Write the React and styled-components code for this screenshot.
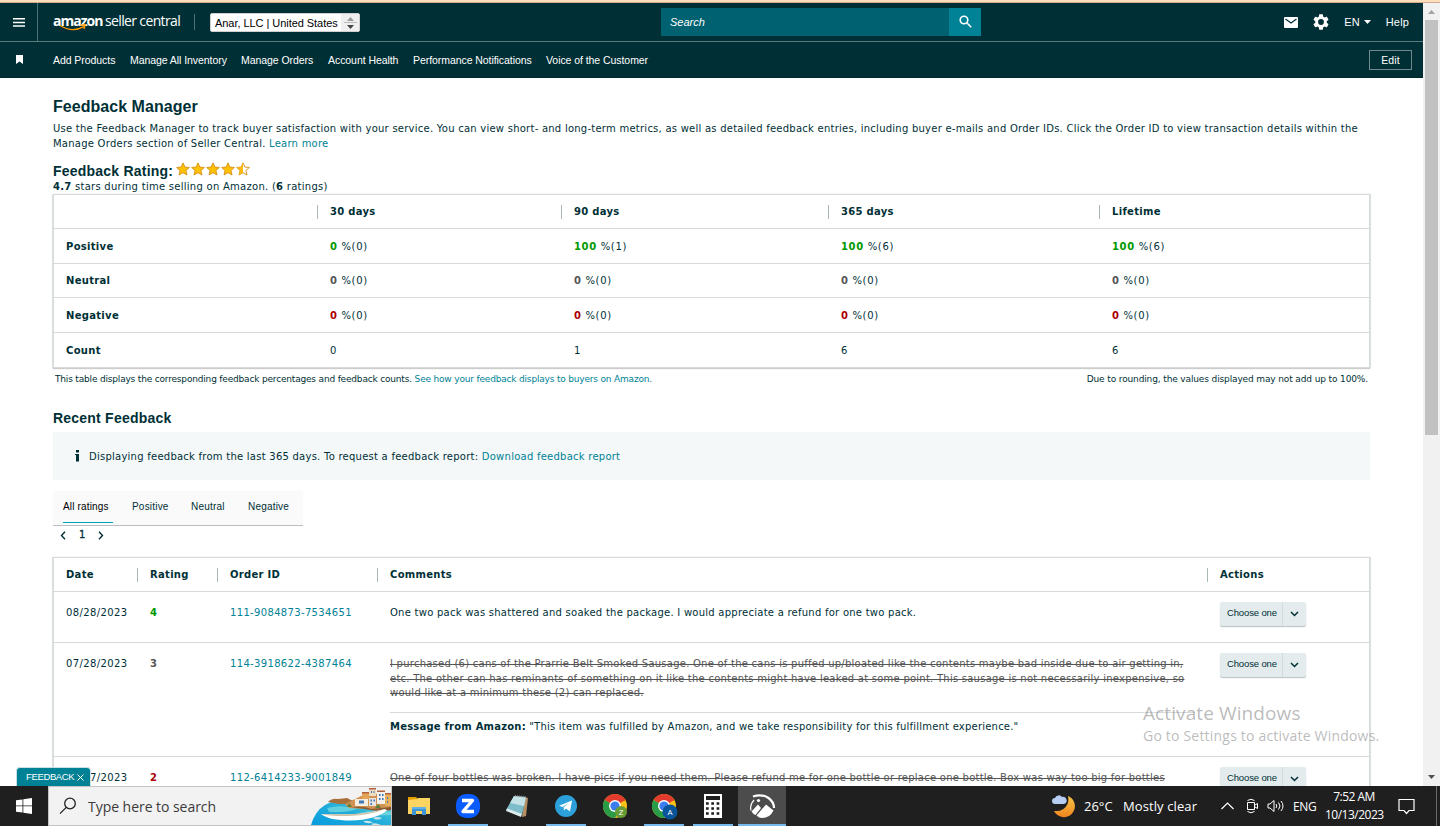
import React from "react";
import styled, { createGlobalStyle, css } from "styled-components";

const GlobalStyle = createGlobalStyle`
  * { box-sizing: border-box; }
  body { margin: 0; background: #fff; overflow: hidden; }
  h1, h2, p { margin: 0; }
`;

const VERDANA = `Verdana, "DejaVu Sans", sans-serif`;
const ARIAL = `Arial, "Liberation Sans", sans-serif`;
const SEGOE = `"Segoe UI", "Open Sans", sans-serif`;

const Screen = styled.div`
  position: relative;
  display: flex;
  flex-direction: column;
  width: 1440px;
  height: 826px;
  overflow: hidden;
  color: #002f36;
  font-family: ${VERDANA};
`;

const TopStrip = styled.div`
  flex: none;
  height: 3px;
  background: #fddfbb;
  border-bottom: 1px solid #cdab8c;
`;

const Viewport = styled.div`
  display: flex;
  height: 783px;
`;

const Page = styled.div`
  width: 1423px;
  overflow: hidden;
`;

/* ---------- header ---------- */

const Header = styled.header`
  height: 75px;
  background: #002f36;
  color: #fff;
  font-family: ${ARIAL};
`;

const HeaderRow = styled.div`
  display: flex;
  align-items: center;
  height: 39px;
  border-bottom: 1px solid #5b7a7e;
`;

const MenuButton = styled.div`
  display: flex;
  align-items: center;
  justify-content: center;
  width: 38px;
  height: 38px;
  border-right: 1px solid #4d7074;
`;

const Logo = styled.div`
  position: relative;
  display: flex;
  gap: 3px;
  width: 128px;
  height: 22px;
  margin-left: 15px;
  font-family: "Open Sans", sans-serif;
  font-size: 14px;
  line-height: 19px;
  white-space: nowrap;
`;

const LogoBold = styled.span`
  width: 49px;
  font-weight: 700;
  letter-spacing: -1px;
`;

const LogoLight = styled.span`
  letter-spacing: -0.64px;
`;

const Smile = styled.svg`
  position: absolute;
  left: 6px;
  top: 12px;
`;

const Divider = styled.div`
  width: 1px;
  height: 16px;
  margin: 0 15px 0 13px;
  background: #4d7074;
`;

const AccountSelect = styled.div`
  display: flex;
  justify-content: space-between;
  width: 150px;
  height: 19px;
  margin-top: 1px;
  padding-left: 4px;
  overflow: hidden;
  border: 1px solid #d0d0d0;
  border-radius: 2px;
  background: #fff;
  color: #000;
  font-size: 11px;
  line-height: 18px;
  letter-spacing: -0.05px;
  white-space: nowrap;
`;

const SelectHandle = styled.div`
  display: flex;
  align-items: center;
  justify-content: center;
  width: 18px;
  background: #efefef;
`;

const SearchBox = styled.div`
  display: flex;
  width: 320px;
  height: 28px;
  margin-left: 301px;
`;

const SearchInput = styled.div`
  flex: 1;
  padding-left: 9px;
  background: #006170;
  font-size: 11px;
  font-style: italic;
  line-height: 28px;
`;

const SearchButton = styled.div`
  display: flex;
  align-items: center;
  justify-content: center;
  width: 32px;
  padding-bottom: 1px;
  background: #008296;
`;

const HeaderTools = styled.div`
  display: flex;
  align-items: center;
  margin-left: auto;
  padding-right: 14px;
  font-size: 11px;
  letter-spacing: 0.15px;
`;

const GearIcon = styled.svg`
  margin-left: 15px;
`;

const Language = styled.div`
  display: flex;
  align-items: center;
  gap: 4px;
  margin: 0 15px 0 15px;
`;

const NavRow = styled.nav`
  display: flex;
  align-items: center;
  height: 36px;
  font-size: 10.5px;
  border-bottom: 1px solid #00262c;
`;

const BookmarkIcon = styled.svg`
  margin-left: 16px;
`;

const NavLinks = styled.div`
  display: flex;
  gap: 14px;
  margin-left: 30px;
  padding-top: 1px;
`;

const NavLink = styled.span`
  width: ${p => p.$w}px;
  white-space: nowrap;
  letter-spacing: -0.06px;
`;

const EditButton = styled.div`
  width: 43px;
  height: 20px;
  margin: 1px 11px 0 auto;
  border: 1px solid #6f898c;
  line-height: 18px;
  text-align: center;
  letter-spacing: 0.1px;
`;

/* ---------- content ---------- */

const Content = styled.main`
  width: 1317px;
  margin: 18px 0 0 53px;
  font-size: 10px;
`;

const Title = styled.h1`
  height: 20px;
  font: 700 16px/22px ${ARIAL};
  letter-spacing: 0.04px;
`;

const Intro = styled.p`
  margin-top: 5px;
  line-height: 15px;
  letter-spacing: 0.245px;
  white-space: nowrap;
`;

const Link = styled.a`
  color: #008296;
`;

const RatingTitle = styled.h2`
  display: flex;
  height: 19px;
  margin-top: 10px;
  font: 700 14px/20px ${ARIAL};
  letter-spacing: 0.22px;
`;

const Stars = styled.div`
  display: flex;
  gap: 1px;
  margin: 1px 0 0 3px;
`;

const RatingSummary = styled.p`
  height: 14px;
  line-height: 14px;
  letter-spacing: 0.27px;
`;

const Table = styled.div`
  border: 1px solid #d5dbdb;
  box-shadow: 0 1px 1px #ccc, -1px 0 1px #e3e6e6, 1px 0 1px #e3e6e6;
  letter-spacing: 0.3px;
`;

const Row = styled.div`
  display: grid;
  grid-template-columns: ${p => p.$columns};
  align-items: ${p => (p.$top ? "start" : "center")};
  height: ${p => p.$h}px;
  border-bottom: ${p => (p.$last ? 0 : 1)}px solid #d5dbdb;
`;

const Cell = styled.div`
  padding-left: 12px;
  line-height: 14px;
  white-space: nowrap;
  font-weight: ${p => (p.$bold ? 700 : 400)};
  padding-top: ${p => p.$pt || 0}px;
  letter-spacing: ${p => p.$ls || 0.3}px;
`;

const HeadCell = styled.div`
  height: 14px;
  padding-left: 12px;
  line-height: 14px;
  font-weight: 700;
  border-right: ${p => (p.$last ? 0 : 1)}px solid #aab7b8;
`;

const TONES = { good: "#090", neutral: "#555", bad: "#a00" };

const Score = styled.b`
  color: ${p => TONES[p.$tone]};
`;

const Notes = styled.div`
  display: flex;
  justify-content: space-between;
  height: 20px;
  margin-top: 1px;
  padding: 0 2px;
  font-size: 9px;
  line-height: 20px;
  letter-spacing: -0.18px;
  white-space: nowrap;
`;

const RoundingNote = styled.span`
  letter-spacing: -0.13px;
`;

const SectionTitle = styled.h2`
  height: 20px;
  margin-top: 19px;
  font: 700 14px/20px ${ARIAL};
  letter-spacing: 0.22px;
`;

const Alert = styled.div`
  display: flex;
  align-items: center;
  height: 48px;
  margin-top: 4px;
  padding-left: 22px;
  background: #f4f8f9;
  letter-spacing: 0.247px;
`;

const InfoMark = styled.svg`
  margin-right: 10px;
`;

const Tabs = styled.div`
  display: flex;
  width: 250px;
  height: 35px;
  margin-top: 11px;
  padding-left: 10px;
  border-bottom: 1px solid #bbbfbf;
  background: #fafafa;
  font-family: ${ARIAL};
  line-height: 32px;
`;

const Tab = styled.div`
  width: ${p => p.$w}px;
  height: 32px;
  margin-right: ${p => p.$gap}px;
  white-space: nowrap;
  letter-spacing: 0.2px;
  ${p =>
    p.$active &&
    css`
      border-bottom: 1px solid #00a1b8;
      color: #000;
      letter-spacing: 0.16px;
    `}
`;

const Pager = styled.div`
  display: flex;
  align-items: center;
  gap: 13px;
  height: 18px;
  margin-bottom: 13px;
  padding-left: 7px;
`;

const PageNumber = styled.span`
  padding-bottom: 2px;
  font-size: 10px;
  -webkit-text-stroke: 0.3px #002f36;
`;

const Struck = styled.p`
  color: #555;
  line-height: 14.5px;
  letter-spacing: 0.243px;
  text-decoration: line-through;
`;

const AmazonMessage = styled.div`
  width: 805px;
  margin-top: 11px;
  padding-top: 7px;
  border-top: 1px solid #d5dbdb;
  letter-spacing: 0.215px;
`;

const Choose = styled.div`
  display: flex;
  width: 86px;
  height: 24px;
  margin: 10px 0 0 12px;
  border-radius: 2px;
  background: #e3ebec;
  box-shadow: 0 1px 1px #b8bfc0;
  font: 9.5px/22px ${ARIAL};
  letter-spacing: -0.14px;
`;

const ChooseLabel = styled.span`
  width: 63px;
  padding-left: 7px;
  border-right: 1px solid #d2dcdd;
  white-space: nowrap;
`;

const ChooseArrow = styled.span`
  display: flex;
  flex: 1;
  align-items: center;
  justify-content: center;
`;

/* ---------- scrollbar ---------- */

const Scrollbar = styled.div`
  display: flex;
  flex-direction: column;
  align-items: center;
  width: 17px;
  background: #f1f1f1;
`;

const ScrollArrow = styled.svg`
  flex: none;
`;

const Thumb = styled.div`
  width: 13px;
  height: 415px;
  margin-bottom: auto;
  background: #c1c1c1;
`;

/* ---------- overlays ---------- */

const FeedbackBadge = styled.div`
  position: absolute;
  left: 16px;
  top: 767px;
  display: flex;
  align-items: center;
  gap: 2px;
  width: 75px;
  height: 19px;
  padding-left: 9px;
  border: 1px solid #c9dfe2;
  border-bottom: 0;
  border-radius: 4px 4px 0 0;
  background: #008296;
  color: #fff;
  font: 9.5px/18px ${ARIAL};
  letter-spacing: -0.36px;
`;

const BadgeText = styled.span`
  width: 49px;
  white-space: nowrap;
`;

const Watermark = styled.div`
  position: absolute;
  left: 1143px;
  top: 700px;
  color: rgba(130, 130, 130, 0.55);
  font-family: ${SEGOE};
  white-space: nowrap;
`;

const WatermarkTitle = styled.div`
  font-size: 19px;
  line-height: 26px;
  letter-spacing: 0.1px;
`;

const WatermarkText = styled.div`
  font-size: 14px;
  line-height: 20px;
  letter-spacing: 0.2px;
`;

/* ---------- taskbar ---------- */

const Taskbar = styled.footer`
  display: flex;
  height: 40px;
  background: #1f1f1f;
  color: #fff;
  font-family: ${SEGOE};
  white-space: nowrap;
`;

const StartButton = styled.div`
  display: flex;
  align-items: center;
  justify-content: center;
  width: 48px;
`;

const TaskSearch = styled.div`
  display: flex;
  align-items: center;
  width: 344px;
  border: 1px solid #c4c4c4;
  background: #f2f2f2;
  color: #3b3b3b;
  font-size: 14px;
  padding-left: 10px;
`;

const TaskSearchText = styled.span`
  flex: 1;
  margin-left: 11px;
  letter-spacing: -0.04px;
`;

const Apps = styled.div`
  display: flex;
  gap: 1px;
  margin-left: 3px;
`;

const AppSlot = styled.div`
  display: flex;
  flex-direction: column;
  align-items: center;
  width: 48px;
  height: 40px;
  padding-top: 6px;
  background: ${p => (p.$active ? "#4c4c4c" : "transparent")};

  &::after {
    content: "";
    width: ${p => (p.$active ? 48 : 40)}px;
    height: 2px;
    margin-top: 4px;
    background: ${p => (p.$open ? "#76b9ed" : "transparent")};
  }
`;

const Tray = styled.div`
  display: flex;
  align-items: center;
  margin-left: auto;
  font-size: 13px;
`;

const Weather = styled.div`
  display: flex;
  align-items: center;
  width: 170px;
  letter-spacing: 0.1px;
`;

const Temperature = styled.span`
  width: 39px;
  margin-left: 9px;
  letter-spacing: 0;
`;

const TrayIcon = styled.svg`
  flex: none;
  margin-right: ${p => p.$gap}px;
`;

const TrayLanguage = styled.span`
  width: 32px;
  font-size: 12px;
  letter-spacing: -0.35px;
`;

const Clock = styled.div`
  width: 58px;
  margin-right: 15px;
  font-size: 12px;
  line-height: 18px;
  text-align: center;
  letter-spacing: -0.5px;
`;

const ShowDesktop = styled.div`
  width: 4px;
  height: 40px;
  margin-left: 21px;
  border-left: 1px solid #6b6b6b;
`;

/* ---------- data ---------- */

const navLinks = [
  ["Add Products", 63],
  ["Manage All Inventory", 97],
  ["Manage Orders", 73],
  ["Account Health", 71],
  ["Performance Notifications", 119],
  ["Voice of the Customer", 104]
];

const metrics = [
  { name: "Positive", tone: "good", h: 35, pt: 2, values: [[0, 0], [100, 1], [100, 6], [100, 6]] },
  { name: "Neutral", tone: "neutral", h: 34, pt: 0, values: [[0, 0], [0, 0], [0, 0], [0, 0]] },
  { name: "Negative", tone: "bad", h: 35, pt: 2, values: [[0, 0], [0, 0], [0, 0], [0, 0]] }
];

const METRIC_COLUMNS = "264px 244px 267px 271px 1fr";
const FEEDBACK_COLUMNS = "84px 80px 160px 830px 1fr";

/* ---------- small pieces ---------- */

const STAR = "M6.5 0.8 8.2 4.7 12.4 5.1 9.2 7.9 10.2 12.1 6.5 9.9 2.8 12.1 3.8 7.9 0.6 5.1 4.8 4.7Z";

const Star = ({ half }) => (
  <svg width="14" height="14" viewBox="0 0 13 13">
    <path d={STAR} fill={half ? "#fff" : "#ffc107"} stroke="#d6951b" strokeWidth="0.9" />
    {half && <path d="M6.5 0.8V9.9L2.8 12.1 3.8 7.9 0.6 5.1 4.8 4.7Z" fill="#fdb813" />}
  </svg>
);

const Chevron = ({ d }) => (
  <svg width="6" height="9" viewBox="0 0 6 9" fill="none" stroke="#002f36" strokeWidth="1.4">
    <path d={d} />
  </svg>
);

const ActionButton = () => (
  <Choose>
    <ChooseLabel>Choose one</ChooseLabel>
    <ChooseArrow>
      <svg width="9" height="6" viewBox="0 0 9 6" fill="none" stroke="#002f36" strokeWidth="1.5">
        <path d="M1 1 4.5 4.5 8 1" />
      </svg>
    </ChooseArrow>
  </Choose>
);

const FeedbackRow = ({ h, date, rating, tone, order, last, children }) => (
  <Row $columns={FEEDBACK_COLUMNS} $h={h} $top $last={last}>
    <Cell $pt={14} $ls={0.4}>
      {date}
    </Cell>
    <Cell $pt={14}>
      <Score $tone={tone}>{rating}</Score>
    </Cell>
    <Cell $pt={14} $ls={0.34}>
      <Link>{order}</Link>
    </Cell>
    <Cell $pt={14} $ls={0.25}>
      {children}
    </Cell>
    <ActionButton />
  </Row>
);

const Chrome = ({ badge, color, size }) => (
  <svg width="28" height="28" viewBox="0 0 28 28">
    <circle cx="14" cy="14" r="12" fill="#fbc116" />
    <path d="M14 14 3.6 8A12 12 0 0 1 24.4 8Z" fill="#e33b2e" />
    <path d="M14 14 3.6 8A12 12 0 0 0 14 26L19.2 17Z" fill="#2a9c48" />
    <path d="M14 8H24.4" stroke="#e33b2e" strokeWidth="1" />
    <circle cx="14" cy="14" r="6" fill="#fff" />
    <circle cx="14" cy="14" r="4.6" fill="#3b7ded" />
    <circle cx="20" cy="20" r={size} fill={color} />
    <text x="20" y="23" fill="#fff" fontSize="8" textAnchor="middle" fontFamily="Open Sans, sans-serif">
      {badge}
    </text>
  </svg>
);

const Harbour = () => (
  <svg width="80" height="38" viewBox="0 0 80 38">
    <defs>
      <linearGradient id="sea" x1="0" y1="1" x2="1" y2="0">
        <stop offset="0" stopColor="#079be0" />
        <stop offset="0.5" stopColor="#22aeda" />
        <stop offset="1" stopColor="#5fd0d6" />
      </linearGradient>
    </defs>
    <path d="M0 38Q4 24 14 18 24 12 38 13L80 17V38Z" fill="url(#sea)" />
    <path d="M16 21Q30 17 46 22 34 26 18 25ZM48 26Q64 22 80 25V28Q60 29 48 26Z" fill="#7fdde0" opacity="0.7" />
    <path d="M17 15Q21 11 27 12L36 11 42 14 40 17 28 17Z" fill="#a8703c" />
    <path d="M34 17 42 13 50 9 60 7 80 6V23Q66 25 54 22L38 21Z" fill="#cf9252" />
    <path d="M40 20Q54 19 60 22L80 20V23Q66 25 54 22Z" fill="#8b5a33" />
    <path d="M44 12h13v7h-13z" fill="#f5ecdd" />
    <path d="M51 6h7v6h-7z" fill="#e3a457" />
    <path d="M58 2h7v7h-7z" fill="#efdcbf" />
    <path d="M58 11h7v8h-7z" fill="#e9e4e0" />
    <path d="M66 5h8v12h-8z" fill="#f3efe9" />
    <path d="M74 7h6v12h-6z" fill="#e8b05c" />
    <path d="M58 1h7v1.500h-7zM66 3.500h8V5h-8zM51 5h7v1.500h-7zM74 6h6v1.500h-6z" fill="#b2603d" />
    <path
      d="M48 13.500h5v3h-5zM60 4h1v2h-1zM62.500 4h1v2h-1zM59.500 12.500h1.500v2h-1.500zM62.500 12.500H64v2h-1.500zM59.500 16H61v2h-1.500zM68 7h1.500v2H68zM71 7h1.500v2H71zM68 11h1.500v2H68zM71 11h1.500v2H71zM76 10h1v2h-1zM76 14h1v2h-1z"
      fill="#3f78b8"
    />
    <path d="M36 20 38 16 41 20ZM64 21 67 17 70 21Z" fill="#5d7f3c" />
    <path d="M10 27Q30 27.500 44 27 60 26 74 22L76 23.500Q64 33 40 33.500 18 33.500 10 27Z" fill="#fff" />
    <path d="M10 27Q30 27.500 44 27 60 26 74 22 60 28 38 29 20 29.500 10 27Z" fill="#cfc0a6" />
    <path d="M52 34.500q5-2 10 1-6 2-10-1ZM62 31q4-2 9 0-5 3-9 0ZM60 37q4-2 10 1H62Z" fill="#cfe3ea" />
  </svg>
);

const App = () => (
  <Screen>
    <GlobalStyle />
    <TopStrip />
    <Viewport>
      <Page>
        <Header>
          <HeaderRow>
            <MenuButton>
              <svg width="12" height="9" viewBox="0 0 12 9" fill="#fff">
                <path d="M0 0h12v1.5H0zM0 3.7h12v1.5H0zM0 7.3h12v1.5H0z" />
              </svg>
            </MenuButton>
            <Logo>
              <LogoBold>amazon</LogoBold>
              <LogoLight>seller central</LogoLight>
              <Smile width="30" height="9" viewBox="0 0 30 9" fill="none" stroke="#f90" strokeWidth="1.3">
                <path d="M1 2.5Q13 10 25 3.6M21.5 2.2 26.3 1.8 25 6" />
              </Smile>
            </Logo>
            <Divider />
            <AccountSelect>
              Anar, LLC | United States
              <SelectHandle>
                <svg width="13" height="13" viewBox="0 0 13 13">
                  <path d="M3 5 6.5 1 10 5Z" fill="#999" />
                  <path d="M0 6h13v1H0z" fill="#bbb" />
                  <path d="M3 9 6.5 13 10 9Z" fill="#444" />
                </svg>
              </SelectHandle>
            </AccountSelect>
            <SearchBox>
              <SearchInput>Search</SearchInput>
              <SearchButton>
                <svg width="13" height="13" viewBox="0 0 13 13" fill="none" stroke="#fff" strokeWidth="1.6">
                  <circle cx="5" cy="5" r="3.8" />
                  <path d="M7.8 7.8 12.2 12.2" />
                </svg>
              </SearchButton>
            </SearchBox>
            <HeaderTools>
              <svg width="14" height="11" viewBox="0 0 14 11">
                <rect width="14" height="11" rx="1" fill="#fff" />
                <path d="M1.5 2 7 6 12.5 2" fill="none" stroke="#002f36" strokeWidth="1.2" />
              </svg>
              <GearIcon width="16" height="16" viewBox="2 2 20 20" fill="#fff">
                <path d="M19.14 12.94c.04-.3.06-.61.06-.94s-.02-.64-.07-.94l2.030-1.580a.49.49 0 0 0 .12-.61l-1.920-3.320a.49.49 0 0 0-.59-.22l-2.390.96a7 7 0 0 0-1.620-.94l-.36-2.540a.48.48 0 0 0-.48-.41h-3.840a.48.48 0 0 0-.47.41l-.36 2.540c-.59.24-1.130.57-1.620.94l-2.390-.96a.48.48 0 0 0-.59.22L2.740 8.870a.48.48 0 0 0 .12.61l2.030 1.580c-.05.3-.09.63-.09.94s.02.64.07.94l-2.030 1.580a.49.49 0 0 0-.12.61l1.920 3.320c.12.22.37.29.59.22l2.390-.96c.5.38 1.030.7 1.620.94l.36 2.540c.05.24.24.41.48.41h3.840c.24 0 .44-.17.47-.41l.36-2.540a7 7 0 0 0 1.620-.94l2.390.96c.22.08.47 0 .59-.22l1.920-3.320a.48.48 0 0 0-.12-.61ZM12 15.600a3.600 3.600 0 1 1 0-7.200 3.600 3.600 0 0 1 0 7.200Z" />
              </GearIcon>
              <Language>
                EN
                <svg width="7" height="4" viewBox="0 0 7 4">
                  <path d="M0 0h7L3.500 4Z" fill="#fff" />
                </svg>
              </Language>
              Help
            </HeaderTools>
          </HeaderRow>
          <NavRow>
            <BookmarkIcon width="7" height="9" viewBox="0 0 7 9">
              <path d="M0 0h7v9L3.500 6.500 0 9Z" fill="#fff" />
            </BookmarkIcon>
            <NavLinks>
              {navLinks.map(([label, w]) => (
                <NavLink key={label} $w={w}>
                  {label}
                </NavLink>
              ))}
            </NavLinks>
            <EditButton>Edit</EditButton>
          </NavRow>
        </Header>

        <Content>
          <Title>Feedback Manager</Title>
          <Intro>
            Use the Feedback Manager to track buyer satisfaction with your service. You can view short- and long-term
            metrics, as well as detailed feedback entries, including buyer e-mails and Order IDs. Click the Order ID to
            view transaction details within the
            <br />
            Manage Orders section of Seller Central. <Link>Learn more</Link>
          </Intro>
          <RatingTitle>
            Feedback Rating:
            <Stars>
              <Star />
              <Star />
              <Star />
              <Star />
              <Star half />
            </Stars>
          </RatingTitle>
          <RatingSummary>
            <b>4.7</b> stars during time selling on Amazon. (<b>6</b> ratings)
          </RatingSummary>

          <Table>
            <Row $columns={METRIC_COLUMNS} $h={34}>
              <HeadCell />
              <HeadCell>30 days</HeadCell>
              <HeadCell>90 days</HeadCell>
              <HeadCell>365 days</HeadCell>
              <HeadCell $last>Lifetime</HeadCell>
            </Row>
            {metrics.map(m => (
              <Row key={m.name} $columns={METRIC_COLUMNS} $h={m.h}>
                <Cell $bold $pt={m.pt}>
                  {m.name}
                </Cell>
                {m.values.map(([percent, count], i) => (
                  <Cell key={i} $pt={m.pt} $ls={0.65}>
                    <Score $tone={m.tone}>{percent}</Score> %({count})
                  </Cell>
                ))}
              </Row>
            ))}
            <Row $columns={METRIC_COLUMNS} $h={34} $last>
              <Cell $bold $pt={2}>
                Count
              </Cell>
              <Cell $pt={2}>0</Cell>
              <Cell $pt={2}>1</Cell>
              <Cell $pt={2}>6</Cell>
              <Cell $pt={2}>6</Cell>
            </Row>
          </Table>
          <Notes>
            <span>
              This table displays the corresponding feedback percentages and feedback counts.{" "}
              <Link>See how your feedback displays to buyers on Amazon.</Link>
            </span>
            <RoundingNote>Due to rounding, the values displayed may not add up to 100%.</RoundingNote>
          </Notes>

          <SectionTitle>Recent Feedback</SectionTitle>
          <Alert>
            <InfoMark width="4" height="12" viewBox="0 0 4 12" fill="#002f36">
              <path d="M1 0h3v2.500H1zM0 4h4v7.500H1V5H0z" />
            </InfoMark>
            <span>
              Displaying feedback from the last 365 days. To request a feedback report:{" "}
              <Link>Download feedback report</Link>
            </span>
          </Alert>

          <Tabs>
            <Tab $w={50} $gap={19} $active>
              All ratings
            </Tab>
            <Tab $w={37} $gap={22}>
              Positive
            </Tab>
            <Tab $w={34} $gap={23}>
              Neutral
            </Tab>
            <Tab $w={42} $gap={0}>
              Negative
            </Tab>
          </Tabs>
          <Pager>
            <Chevron d="M5 0.800 1.500 4.500 5 8.200" />
            <PageNumber>1</PageNumber>
            <Chevron d="M1 0.800 4.500 4.500 1 8.200" />
          </Pager>

          <Table>
            <Row $columns={FEEDBACK_COLUMNS} $h={34}>
              <HeadCell>Date</HeadCell>
              <HeadCell>Rating</HeadCell>
              <HeadCell>Order ID</HeadCell>
              <HeadCell>Comments</HeadCell>
              <HeadCell $last>Actions</HeadCell>
            </Row>
            <FeedbackRow h={51} date="08/28/2023" rating="4" tone="good" order="111-9084873-7534651">
              One two pack was shattered and soaked the package. I would appreciate a refund for one two pack.
            </FeedbackRow>
            <FeedbackRow h={114} date="07/28/2023" rating="3" tone="neutral" order="114-3918622-4387464">
              <Struck>
                I purchased (6) cans of the Prarrie Belt Smoked Sausage. One of the cans is puffed up/bloated like the
                contents maybe bad inside due to air getting in,
                <br />
                etc. The other can has reminants of something on it like the contents might have leaked at some point.
                This sausage is not necessarily inexpensive, so
                <br />
                would like at a minimum these (2) can replaced.
              </Struck>
              <AmazonMessage>
                <b>Message from Amazon:</b> "This item was fulfilled by Amazon, and we take responsibility for this
                fulfillment experience."
              </AmazonMessage>
            </FeedbackRow>
            <FeedbackRow h={51} date="07/27/2023" rating="2" tone="bad" order="112-6414233-9001849" last>
              <Struck>
                One of four bottles was broken. I have pics if you need them. Please refund me for one bottle or replace
                one bottle. Box was way too big for bottles
              </Struck>
            </FeedbackRow>
          </Table>
        </Content>
      </Page>
      <Scrollbar>
        <ScrollArrow width="17" height="17" viewBox="0 0 17 17">
          <path d="M5 11h7L8.500 7Z" fill="#a3a3a3" />
        </ScrollArrow>
        <Thumb />
        <ScrollArrow width="17" height="17" viewBox="0 0 17 17">
          <path d="M5 6h7L8.500 10Z" fill="#505050" />
        </ScrollArrow>
      </Scrollbar>
    </Viewport>

    <Taskbar>
      <StartButton>
        <svg width="16" height="16" viewBox="0 0 16 16" fill="#fff">
          <path d="M0 2.300 6.500 1.400V7.500H0ZM7.300 1.300 16 0V7.500H7.300ZM0 8.300H6.500V14.600L0 13.700ZM7.300 8.300H16V16L7.300 14.700Z" />
        </svg>
      </StartButton>
      <TaskSearch>
        <svg width="18" height="18" viewBox="0 0 18 18" fill="none" stroke="#222" strokeWidth="1.3">
          <circle cx="11" cy="6.500" r="5.300" />
          <path d="M7.200 10.400 1 16.600" />
        </svg>
        <TaskSearchText>Type here to search</TaskSearchText>
        <Harbour />
      </TaskSearch>
      <Apps>
        <AppSlot>
          <svg width="28" height="28" viewBox="0 0 28 28">
            <path d="M3 5h8l2 2v3H3z" fill="#e5a000" />
            <path d="M3 8l9-1 1-1h12v16H3z" fill="#fcd462" />
            <path d="M7 15h14v8h-4v-4h-6v4H7z" fill="#3d95d6" />
            <path d="M7 15h14v2H7z" fill="#63b1e6" />
          </svg>
        </AppSlot>
        <AppSlot $open>
          <svg width="28" height="28" viewBox="0 0 28 28">
            <rect x="2" y="2" width="24" height="24" rx="10" fill="#0b5cff" />
            <path d="M8 8.500H18.500L9 19.500H20" fill="none" stroke="#fff" strokeWidth="3.400" strokeLinejoin="round" />
          </svg>
        </AppSlot>
        <AppSlot>
          <svg width="28" height="28" viewBox="0 0 28 28">
            <path d="M22 5l3 1-2 18-4 1z" fill="#b58f61" />
            <path d="M11 4l12 1-4 18L3 18z" fill="#7dbcc8" />
            <path d="M11 4l12 1-2 9L7 11z" fill="#c5e2e6" />
            <path d="M4 16.500l15 5.500-1 3-15-6z" fill="#dcebed" />
            <path d="M12 3.500l11 1.500" stroke="#777" strokeWidth="1.500" strokeDasharray="1 1" />
          </svg>
        </AppSlot>
        <AppSlot $open>
          <svg width="28" height="28" viewBox="0 0 28 28">
            <circle cx="14" cy="14" r="11" fill="#2ba0da" />
            <path d="M7 13.800 20 8.500 18 19.500 14 16.500 12 18.500 11.600 15.200 17 10.700 10.500 14.900Z" fill="#fff" />
          </svg>
        </AppSlot>
        <AppSlot>
          <Chrome badge="Z" color="#669c35" size={6} />
        </AppSlot>
        <AppSlot $open>
          <Chrome badge="A" color="#07549b" size={7.5} />
        </AppSlot>
        <AppSlot $open>
          <svg width="28" height="28" viewBox="0 0 28 28">
            <path d="M5 2h18v24H5z" fill="#fff" />
            <path d="M7 4h14v4H7z" fill="#1f1f1f" />
            <path
              d="M7 11.500h13.500M7 16.500h13.500M7 21.500h13.500"
              stroke="#1f1f1f"
              strokeWidth="2.600"
              strokeDasharray="2.700 2.600"
            />
          </svg>
        </AppSlot>
        <AppSlot $open $active>
          <svg width="28" height="28" viewBox="0 0 28 28" fill="#fff">
            <path d="M5 4.500Q14 1.500 20.500 6 26 10 26 16" fill="none" stroke="#fff" strokeWidth="2.200" />
            <path d="M6 8Q1.500 13 3 18.500" fill="none" stroke="#fff" strokeWidth="1.200" />
            <path d="M3.500 19.500 10 12.500 13 16 7.500 23Q5 22 3.500 19.500ZM8.500 23.500 18 12.500 25.500 18.500Q22 26 14 26 11 26 8.500 23.500Z" />
            <circle cx="10.500" cy="8.500" r="1.600" />
          </svg>
        </AppSlot>
      </Apps>
      <Tray>
        <Weather>
          <svg width="24" height="24" viewBox="0 0 24 24">
            <defs>
              <linearGradient id="moon" x1="0" y1="0" x2="0" y2="1">
                <stop offset="0" stopColor="#f8c54a" />
                <stop offset="1" stopColor="#f0841e" />
              </linearGradient>
            </defs>
            <path d="M17 2A11 11 0 1 1 3 17Q13 18 16.500 10 18 6 17 2Z" fill="url(#moon)" />
            <path d="M4 10a3 3 0 0 1 0-6 4 4 0 0 1 7-1 3.500 3.500 0 0 1 2 7Z" fill="#b8cdf2" />
          </svg>
          <Temperature>26°C</Temperature>
          Mostly clear
        </Weather>
        <TrayIcon $gap={12} width="13" height="8" viewBox="0 0 13 8" fill="none" stroke="#fff" strokeWidth="1.200">
          <path d="M0.500 7 6.500 1 12.500 7" />
        </TrayIcon>
        <TrayIcon $gap={8} width="13" height="16" viewBox="0 0 13 16" fill="none" stroke="#fff">
          <path d="M1.500 4.500h7v7h-7zM9 7l2.500-1.500v5L9 9M1.500 2.500Q5 0 8.500 2.500M1.500 13.500Q5 16 8.500 13.500" />
        </TrayIcon>
        <TrayIcon $gap={8} width="18" height="14" viewBox="0 0 18 14" fill="none" stroke="#fff">
          <path d="M1 5h2l4-3.500v11L3 9H1zM9 5q1.500 2 0 4M11.500 3.500q3 3.500 0 7M14 2q4 5 0 10" />
        </TrayIcon>
        <TrayLanguage>ENG</TrayLanguage>
        <Clock>
          7:52 AM
          <br />
          10/13/2023
        </Clock>
        <TrayIcon $gap={0} width="17" height="17" viewBox="0 0 17 17" fill="none" stroke="#fff" strokeWidth="1.200">
          <path d="M1 1.500h15v11H11l-2.500 3-2.500-3H1z" />
        </TrayIcon>
        <ShowDesktop />
      </Tray>
    </Taskbar>

    <FeedbackBadge>
      <BadgeText>FEEDBACK</BadgeText>
      <svg width="7" height="7" viewBox="0 0 7 7" stroke="#fff">
        <path d="M0.500 0.500 6.500 6.500M6.500 0.500 0.500 6.500" />
      </svg>
    </FeedbackBadge>
    <Watermark>
      <WatermarkTitle>Activate Windows</WatermarkTitle>
      <WatermarkText>Go to Settings to activate Windows.</WatermarkText>
    </Watermark>
  </Screen>
);

export default App;
